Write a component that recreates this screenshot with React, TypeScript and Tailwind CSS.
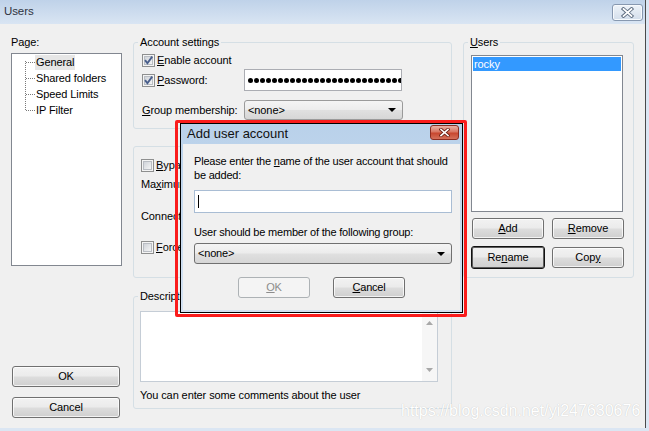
import React from "react";

function U({ children }: { children: React.ReactNode }) {
  return <span className="underline underline-offset-[1px] decoration-[1px]">{children}</span>;
}

function CheckBox({ checked = false }: { checked?: boolean }) {
  return (
    <svg width="13" height="13" viewBox="0 0 13 13" className="block shrink-0">
      <defs>
        <linearGradient id="cbfill" x1="0" y1="0" x2="1" y2="1">
          <stop offset="0" stopColor="#cdd1d7" />
          <stop offset="1" stopColor="#f7f7f7" />
        </linearGradient>
      </defs>
      <rect x="0.5" y="0.5" width="12" height="12" fill="#f4f4f4" stroke="#8e8f8f" />
      <rect x="2.5" y="2.5" width="8" height="8" fill="url(#cbfill)" stroke="#b9bdc3" />
      {checked && (
        <path d="M3 6.2 L5.4 9.2 L10.2 2.6" stroke="#4a5f8c" strokeWidth="1.9" fill="none" />
      )}
    </svg>
  );
}

type BtnVariant = "normal" | "default" | "disabled";

function WinButton({
  children,
  className = "",
  variant = "normal",
}: {
  children: React.ReactNode;
  className?: string;
  variant?: BtnVariant;
}) {
  let v = "";
  if (variant === "normal")
    v =
      "border-[#707070] bg-[linear-gradient(#f2f2f2,#ebebeb_48%,#dddddd_52%,#cfcfcf)] shadow-[inset_0_0_0_1px_rgba(255,255,255,0.75)] text-black";
  if (variant === "default")
    v =
      "border-[#111111] bg-[linear-gradient(#f2f2f2,#ebebeb_48%,#dddddd_52%,#cfcfcf)] shadow-[inset_0_0_0_1px_#5c5c5c] text-black";
  if (variant === "disabled") v = "border-[#adb2b5] bg-[#f4f4f4] text-[#8d8d8d]";
  return (
    <div className={`flex items-center justify-center rounded-[3px] border leading-none ${v} ${className}`}>
      {children}
    </div>
  );
}

function Combo({ className = "" }: { className?: string }) {
  return (
    <div
      className={`flex items-center justify-between rounded-[3px] border bg-[linear-gradient(#f4f4f4,#ececec_48%,#e0e0e0_52%,#d6d6d6)] pl-[3px] pr-[6px] ${className}`}
    >
      <span>&lt;none&gt;</span>
      <svg width="8" height="4" viewBox="0 0 8 4" className="block">
        <path d="M0 0 H8 L4 4 Z" fill="#000" />
      </svg>
    </div>
  );
}

function TitleClose() {
  return (
    <div className="w-[31px] h-[17px] rounded-[3px] border border-[#8798b0] bg-[linear-gradient(#eef3f9,#d3deeb)] shadow-[inset_0_0_0_1px_#f7fafd] flex items-center justify-center">
      <svg width="13" height="11" viewBox="0 0 13 11" className="block">
        <path d="M2.5 2 L10.5 9 M10.5 2 L2.5 9" stroke="#5d6c80" strokeWidth="3.6" strokeLinecap="square" />
        <path d="M2.5 2 L10.5 9 M10.5 2 L2.5 9" stroke="#ffffff" strokeWidth="1.7" strokeLinecap="square" />
      </svg>
    </div>
  );
}

function DialogClose() {
  return (
    <div className="mt-[1px] w-[29px] h-[15px] rounded-[3px] border border-[#8c2c20] bg-[linear-gradient(#eab2a6,#d87662_45%,#c8472f_55%,#d4705a)] flex items-center justify-center">
      <svg width="11" height="9" viewBox="0 0 11 9" className="block">
        <path d="M2 1.5 L9 7.5 M9 1.5 L2 7.5" stroke="#6e2418" strokeWidth="3.4" strokeLinecap="square" />
        <path d="M2 1.5 L9 7.5 M9 1.5 L2 7.5" stroke="#ffffff" strokeWidth="1.6" strokeLinecap="square" />
      </svg>
    </div>
  );
}

export default function App() {
  const dots = Array.from({ length: 26 });
  return (
    <div className="relative w-[649px] h-[431px] overflow-hidden bg-[#dbe6f3] font-['Liberation_Sans',Arial,sans-serif] text-[11px] tracking-[-0.1px] text-black">
      <div className="flex flex-col w-[646px] h-[428px] border-r border-[#4a4a4a] bg-[#f0f0f0]">
        {/* title bar */}
        <div className="h-[24px] shrink-0 flex items-center justify-between pl-[4px] pr-[2px] bg-[linear-gradient(#bfd2e9,#d9e5f3)]">
          <span className="text-[11.5px] text-[#2e3440]">Users</span>
          <TitleClose />
        </div>

        {/* body */}
        <div className="flex flex-1 min-h-0">
          {/* left column */}
          <div className="ml-[11px] w-[111px] flex flex-col pt-[12px] pb-[10px]">
            <div className="h-[13px] leading-[13px]">Page:</div>
            <div className="mt-[4px] h-[213px] border border-[#828790] bg-white flex">
              <svg width="23" height="64" className="block shrink-0">
                <g stroke="#7a7a7a" strokeWidth="1" strokeDasharray="1 1" shapeRendering="crispEdges">
                  <path d="M13.5 7 V57" />
                  <path d="M14 8.5 H23" />
                  <path d="M14 24.5 H23" />
                  <path d="M14 40.5 H23" />
                  <path d="M14 56.5 H23" />
                </g>
              </svg>
              <div className="flex flex-col">
                <div className="h-[16px] flex items-center">
                  <span className="bg-[#e6e6e6] px-[1px] leading-[15px]">General</span>
                </div>
                <div className="h-[16px] flex items-center px-[1px]">Shared folders</div>
                <div className="h-[16px] flex items-center px-[1px]">Speed Limits</div>
                <div className="h-[16px] flex items-center px-[1px]">IP Filter</div>
              </div>
            </div>
            <div className="mt-auto flex flex-col gap-[10px] pl-[1px]">
              <WinButton className="w-[108px] h-[21px]">OK</WinButton>
              <WinButton className="w-[108px] h-[21px]">Cancel</WinButton>
            </div>
          </div>

          {/* middle column */}
          <div className="ml-[11px] w-[319px] flex flex-col pt-[12px]">
            <fieldset className="h-[93px] border border-[#d5dfe5] rounded-[3px] pl-[8px]">
              <legend className="-ml-[4px] px-[2px] leading-[13px]">Account settings</legend>
              <div className="mt-[5px] h-[13px] flex items-center gap-[2px]">
                <CheckBox checked />
                <span>
                  <U>E</U>nable account
                </span>
              </div>
              <div className="mt-[2px] h-[22px] flex items-center">
                <div className="w-[102px] flex items-center gap-[2px]">
                  <CheckBox checked />
                  <span>
                    <U>P</U>assword:
                  </span>
                </div>
                <div className="w-[158px] h-[22px] border border-[#abadb3] bg-white flex items-center pl-[3px] gap-[1px] overflow-hidden">
                  {dots.map((_, i) => (
                    <span key={i} className="block shrink-0 w-[5px] h-[5px] rounded-full bg-black" />
                  ))}
                </div>
              </div>
              <div className="mt-[9px] h-[20px] flex items-center">
                <div className="w-[102px]">
                  <U>G</U>roup membership:
                </div>
                <Combo className="w-[159px] h-[20px] border-[#9a9a9a]" />
              </div>
            </fieldset>

            <div className="mt-[17px] h-[132px] border border-[#d5dfe5] rounded-[3px] pl-[7px] pt-[12px] flex flex-col">
              <div className="h-[13px] flex items-center gap-[2px]">
                <CheckBox />
                <span>
                  <U>B</U>ypass userlimit of server
                </span>
              </div>
              <div className="mt-[6px] h-[13px] leading-[13px]">
                Ma<U>x</U>imum connection count:
              </div>
              <div className="mt-[19px] h-[13px] leading-[13px]">Connection limit per IP:</div>
              <div className="mt-[18px] h-[13px] flex items-center gap-[2px]">
                <CheckBox />
                <span>
                  <U>F</U>orce SSL for user login
                </span>
              </div>
            </div>

            <fieldset className="mt-[12px] h-[119px] border border-[#d5dfe5] rounded-[3px] pl-[6px]">
              <legend className="-ml-[2px] px-[2px] leading-[13px]">Description</legend>
              <div className="mt-[8px] w-[298px] h-[71px] border border-[#c5cdd6] bg-white flex justify-end">
                <div className="w-[15px] bg-[#f6f6f6] flex flex-col items-center justify-between py-[9px]">
                  <svg width="7" height="4" viewBox="0 0 7 4" className="block">
                    <path d="M0 4 H7 L3.5 0 Z" fill="#a8a8a8" />
                  </svg>
                  <svg width="7" height="4" viewBox="0 0 7 4" className="block">
                    <path d="M0 0 H7 L3.5 4 Z" fill="#a8a8a8" />
                  </svg>
                </div>
              </div>
              <div className="mt-[7px] h-[13px] leading-[13px]">You can enter some comments about the user</div>
            </fieldset>
          </div>

          {/* right column */}
          <div className="ml-[11px] w-[171px] pt-[12px]">
            <fieldset className="h-[242px] border border-[#d5dfe5] rounded-[3px] pl-[7px]">
              <legend className="-ml-[3px] px-[2px] leading-[13px]">
                <U>U</U>sers
              </legend>
              <div className="mt-[6px] w-[152px] h-[157px] border border-[#828790] bg-white p-[1px]">
                <div className="h-[14px] bg-[#3399ff] text-white leading-[14px] pl-[1px]">rocky</div>
              </div>
              <div className="mt-[6px] flex gap-[8px] pl-[1px]">
                <WinButton className="w-[72px] h-[21px]">
                  <span>
                    <U>A</U>dd
                  </span>
                </WinButton>
                <WinButton className="w-[72px] h-[21px]">
                  <span>
                    <U>R</U>emove
                  </span>
                </WinButton>
              </div>
              <div className="mt-[7px] flex items-center gap-[7px]">
                <WinButton variant="default" className="w-[74px] h-[23px]">
                  <span>
                    Re<U>n</U>ame
                  </span>
                </WinButton>
                <WinButton className="w-[72px] h-[21px]">
                  <span>
                    Cop<U>y</U>
                  </span>
                </WinButton>
              </div>
            </fieldset>
          </div>
        </div>
      </div>

      {/* red annotation + modal dialog */}
      <div className="absolute left-[175px] top-[120px] w-[292px] h-[197px] border-[3px] border-[#fa1c1c] rounded-[2px] flex pl-[2px] pr-[1px] pb-[1px]">
        <div className="flex-1 flex flex-col border border-black bg-[linear-gradient(#b9d1ea,#d4e2f2)]">
          <div className="h-[20px] shrink-0 flex items-start justify-between pl-[6px] pr-[3px]">
            <span className="text-[13px] leading-[17px] pt-[1px] text-[#111] tracking-normal">Add user account</span>
            <DialogClose />
          </div>
          <div className="flex-1 mx-[2px] mb-[2px] bg-[#f0f0f0] pl-[11px] pt-[10px] flex flex-col tracking-[-0.2px]">
            <div className="leading-[14px]">
              Please enter the <U>n</U>ame of the user account that should
              <br />
              be added:
            </div>
            <div className="mt-[8px] w-[258px] h-[23px] border border-[#a9bdd4] bg-white flex items-center pl-[3px]">
              <span className="block w-[1px] h-[13px] bg-black" />
            </div>
            <div className="mt-[12px] leading-[14px]">
              User should be member of the following <U>g</U>roup:
            </div>
            <Combo className="mt-[4px] w-[258px] h-[21px] border-[#707070]" />
            <div className="mt-[13px] ml-[44px] flex gap-[23px]">
              <WinButton variant="disabled" className="w-[72px] h-[21px]">
                <span>
                  <U>O</U>K
                </span>
              </WinButton>
              <WinButton className="w-[72px] h-[21px]">
                <span>
                  <U>C</U>ancel
                </span>
              </WinButton>
            </div>
          </div>
        </div>
      </div>

      {/* watermark */}
      <div className="absolute left-[401px] top-[401px] text-[16px] leading-[20px] tracking-normal text-white [text-shadow:0_0_1px_rgba(0,0,0,0.22)]">
        https://blog.csdn.net/yi247630676
      </div>
    </div>
  );
}
